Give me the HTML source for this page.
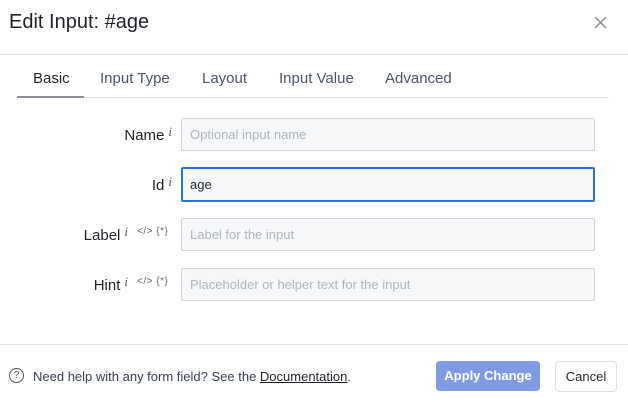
<html><head><style>
body{margin:0;width:628px;height:404px;background:#fff;font-family:"Liberation Sans",sans-serif;position:relative;overflow:hidden;color:#1f2328}
.a{position:absolute}
.t{font-size:15px;color:#4b5563;top:70px}
.lab{font-size:15px;color:#1f2328;text-align:right;right:456px}
.i{font-style:italic;font-family:"Liberation Serif",serif;font-size:13px;color:#555;vertical-align:4px;margin-left:4px}
.inp{left:181px;border:1px solid #d1d5db;border-radius:2px;background:#f6f7f9;font-size:13px;color:#b0b5bd;box-sizing:border-box;padding:8px 0 0 8px;height:33px;width:414px}
.ic{font-size:10px;color:#666;left:137px;letter-spacing:0.5px}
</style></head><body>
<div class="a" style="left:9px;top:11px;font-size:20px;color:#1f2328">Edit Input: #age</div>
<svg class="a" style="left:594px;top:16px" width="13" height="13"><path d="M1 1L12 12M12 1L1 12" stroke="#8b8f96" stroke-width="1.5"/></svg>
<div class="a" style="left:0;top:54px;width:628px;height:1px;background:#e2e4e8"></div>
<div class="a t" style="left:33px;color:#1f2328">Basic</div>
<div class="a t" style="left:100px">Input Type</div>
<div class="a t" style="left:202px">Layout</div>
<div class="a t" style="left:279px">Input Value</div>
<div class="a t" style="left:385px">Advanced</div>
<div class="a" style="left:17px;top:97px;width:592px;height:1px;background:#e2e4e8"></div>
<div class="a" style="left:17px;top:96px;width:67px;height:2px;background:#8b9098"></div>

<div class="a lab" style="top:124px">Name<span class="i">i</span></div>
<div class="a inp" style="top:118px">Optional input name</div>
<div class="a lab" style="top:174px">Id<span class="i">i</span></div>
<div class="a inp" style="top:167px;border:2px solid #2f6fe4;padding:8px 0 0 7px;color:#1f2328;height:35px">age</div>
<div class="a lab" style="top:224px;right:500px">Label<span class="i">i</span></div>
<div class="a ic" style="top:226px">&lt;/&gt; {*}</div>
<div class="a inp" style="top:218px">Label for the input</div>
<div class="a lab" style="top:274px;right:500px">Hint<span class="i">i</span></div>
<div class="a ic" style="top:276px">&lt;/&gt; {*}</div>
<div class="a inp" style="top:268px">Placeholder or helper text for the input</div>

<div class="a" style="left:0;top:344px;width:628px;height:1px;background:#e2e4e8"></div>
<div class="a" style="left:9px;top:368px;width:13px;height:13px;border:1.3px solid #555;border-radius:50%;font-size:10px;text-align:center;line-height:13px;color:#555">?</div>
<div class="a" style="left:33px;top:369px;font-size:13px;color:#374151">Need help with any form field? See the <span style="text-decoration:underline;color:#1f2328">Documentation</span>.</div>
<div class="a" style="left:436px;top:361px;width:104px;height:30px;background:#7f9be6;border-radius:4px;color:#fff;font-size:13px;font-weight:bold;text-align:center;line-height:30px">Apply Change</div>
<div class="a" style="left:555px;top:361px;width:60px;height:29px;border:1px solid #dcdfe3;border-radius:4px;color:#1f2328;font-size:13px;text-align:center;line-height:29px">Cancel</div>
</body></html>
